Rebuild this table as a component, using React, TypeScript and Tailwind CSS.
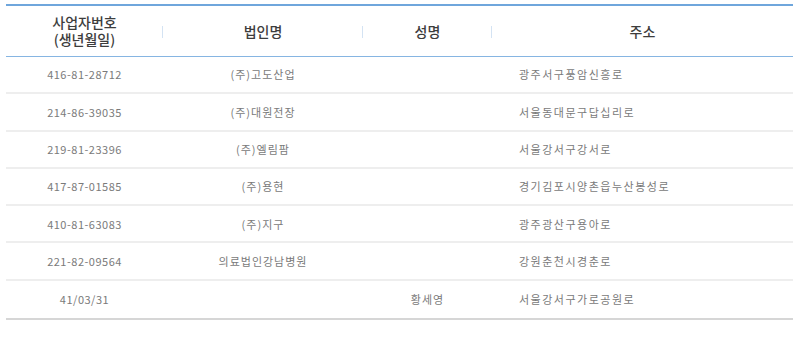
import React from "react";

const rows = [
  { no: "416-81-28712", corp: "(주)고도산업", name: "", addr: "광주서구풍암신흥로" },
  { no: "214-86-39035", corp: "(주)대원전장", name: "", addr: "서울동대문구답십리로" },
  { no: "219-81-23396", corp: "(주)엘림팜", name: "", addr: "서울강서구강서로" },
  { no: "417-87-01585", corp: "(주)용현", name: "", addr: "경기김포시양촌읍누산봉성로" },
  { no: "410-81-63083", corp: "(주)지구", name: "", addr: "광주광산구용아로" },
  { no: "221-82-09564", corp: "의료법인강남병원", name: "", addr: "강원춘천시경춘로" },
  { no: "41/03/31", corp: "", name: "황세영", addr: "서울강서구가로공원로" },
];

const cols = "grid grid-cols-[157px_200px_129px_1fr]";

function HeadCell({ children, divider }: { children: React.ReactNode; divider?: boolean }) {
  return (
    <div className="relative flex items-center justify-center text-center">
      {children}
      {divider && <span className="absolute right-0 top-[20px] h-[12px] w-px bg-[#d4e3f3]" />}
    </div>
  );
}

export default function App() {
  return (
    <div className="min-h-screen bg-white pt-1 pl-[6px] pr-[7px] font-['Noto_Sans_CJK_KR',sans-serif]">
      <div className="border-t-2 border-b-2 border-t-[#6fa6dc] border-b-[#d6d6d6]">
        {/* Header */}
        <div className={`${cols} h-[51px] border-b border-[#86b5e2] text-[14px] leading-[17px] text-[#3d3d3d] font-medium`}>
          <HeadCell divider>
            <div className="flex flex-col">
              <span className="h-[17px] leading-[17px]">사업자번호</span>
              <span className="h-[17px] leading-[17px]">(생년월일)</span>
            </div>
          </HeadCell>
          <HeadCell divider>법인명</HeadCell>
          <HeadCell divider>성명</HeadCell>
          <HeadCell>주소</HeadCell>
        </div>

        {/* Rows */}
        {rows.map((r, i) => (
          <div
            key={r.no}
            className={`${cols} h-[37.3px] items-center text-[11px] text-[#7a7a7a] ${
              i < rows.length - 1 ? "border-b-2 border-[#eeeeee]" : ""
            }`}
          >
            <div className="text-center tracking-[0.5px]">{r.no}</div>
            <div className="text-center tracking-[1px]">{r.corp}</div>
            <div className="text-center tracking-[1px]">{r.name}</div>
            <div className="pl-[27px] tracking-[1.5px]">{r.addr}</div>
          </div>
        ))}
      </div>
    </div>
  );
}
